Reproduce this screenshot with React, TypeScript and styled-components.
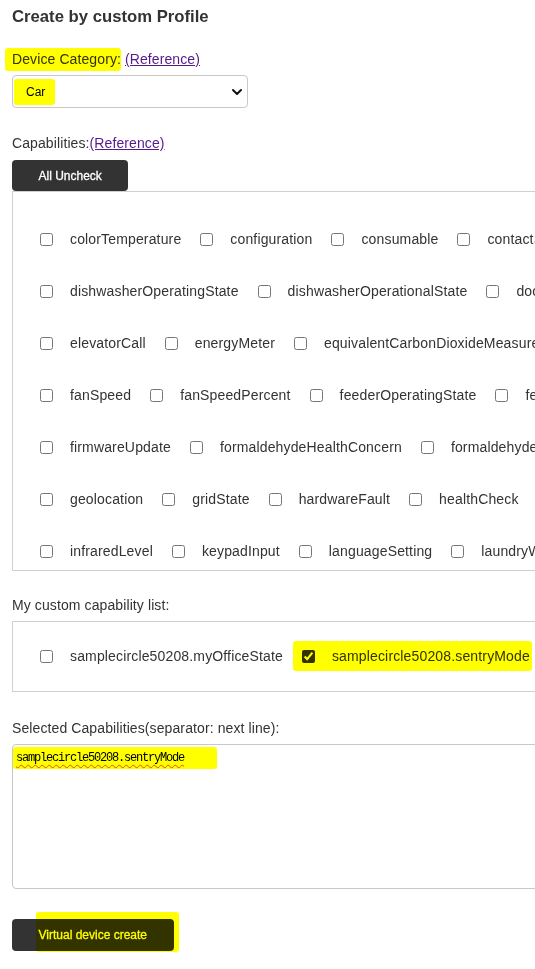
import React from 'react';
import styled, { createGlobalStyle } from 'styled-components';
import { ChevronDown } from 'lucide-react';

const GlobalStyle = createGlobalStyle`
  html, body {
    margin: 0;
    padding: 0;
    background: #fff;
    overflow: hidden;
  }
  body {
    font-family: 'Liberation Sans', Arial, sans-serif;
    color: #333;
  }
`;

const Page = styled.div`
  width: 535px;
  height: 969px;
  overflow: hidden;
  padding-left: 12px;
  box-sizing: border-box;
`;

const Title = styled.h3`
  margin: 7px 0 0;
  font-size: 16.7px;
  line-height: 20px;
  font-weight: bold;
  color: #333;
`;

const Label = styled.div<{ $top: number }>`
  margin-top: ${(p) => p.$top}px;
  font-size: 14px;
  line-height: 20px;
  letter-spacing: 0.1px;
  color: #333;
  white-space: nowrap;
`;

const RefLink = styled.a`
  color: #551a8b;
  text-decoration: underline;
  cursor: pointer;
`;

// yellow marker stroke laid over the content
const Mark = styled.span<{ $l: number; $r: number; $t: number; $b: number }>`
  position: relative;
  display: inline-flex;
  align-items: center;

  &::after {
    content: '';
    position: absolute;
    left: ${(p) => p.$l}px;
    right: ${(p) => p.$r}px;
    top: ${(p) => p.$t}px;
    bottom: ${(p) => p.$b}px;
    background: #ffff00;
    mix-blend-mode: multiply;
    border-radius: 3px;
    pointer-events: none;
  }
`;

const SelectBox = styled.div`
  margin-top: 6px;
  width: 236px;
  height: 33px;
  box-sizing: border-box;
  border: 1px solid #c8c8c8;
  border-radius: 4px;
  display: flex;
  align-items: center;
  justify-content: space-between;
  padding: 0 2px 0 13px;
  font-size: 12px;
  color: #000;
`;

const DarkButton = styled.button<{ $top: number; $height: number }>`
  margin-top: ${(p) => p.$top}px;
  height: ${(p) => p.$height}px;
  padding: 0 26.5px;
  background: #333;
  color: #fff;
  border: none;
  border-radius: 4px;
  font-family: 'Liberation Sans', Arial, sans-serif;
  font-size: 12px;
  -webkit-text-stroke: 0.3px currentColor;
  display: flex;
  align-items: center;
  cursor: pointer;
`;

const CheckPanel = styled.div<{ $height: number; $padTop: number }>`
  width: 900px;
  height: ${(p) => p.$height}px;
  box-sizing: border-box;
  border: 1px solid #cfcfcf;
  padding-top: ${(p) => p.$padTop}px;
  overflow: hidden;
`;

const CheckRow = styled.div`
  height: 52px;
  display: flex;
  align-items: center;
  padding-left: 27px;
  white-space: nowrap;
`;

const Item = styled.label<{ $last?: boolean }>`
  display: inline-flex;
  align-items: center;
  margin-right: ${(p) => (p.$last ? 0 : 19)}px;
  font-size: 14px;
  letter-spacing: 0.15px;
  color: #333;
`;

const Check = styled.input`
  width: 13px;
  height: 13px;
  margin: 0 17px 0 0;
  accent-color: #333;
`;

const TextBox = styled.div`
  margin-top: 6px;
  width: 900px;
  height: 145px;
  box-sizing: border-box;
  border: 1px solid #c8c8c8;
  border-radius: 4px;
  padding: 2px 3px;
`;

const MonoText = styled.span`
  font-family: 'Liberation Mono', 'Courier New', monospace;
  font-size: 12px;
  line-height: 16px;
  letter-spacing: -1.2px;
  color: #000;
  text-decoration: underline wavy #e0533a;
  text-decoration-thickness: 1px;
  text-underline-offset: 3px;
`;

const capabilityRows: string[][] = [
  ['colorTemperature', 'configuration', 'consumable', 'contactSensor'],
  ['dishwasherOperatingState', 'dishwasherOperationalState', 'doorControl'],
  ['elevatorCall', 'energyMeter', 'equivalentCarbonDioxideMeasurement'],
  ['fanSpeed', 'fanSpeedPercent', 'feederOperatingState', 'feederPortion'],
  ['firmwareUpdate', 'formaldehydeHealthConcern', 'formaldehydeMeasurement'],
  ['geolocation', 'gridState', 'hardwareFault', 'healthCheck', 'humidityMeasurement'],
  ['infraredLevel', 'keypadInput', 'languageSetting', 'laundryWasherMode'],
  ['lock', 'lockCodes', 'mediaPlayback', 'motionSensor'],
];

const App: React.FC = () => {
  return (
    <Page>
      <GlobalStyle />
      <Title>Create by custom Profile</Title>

      <Label $top={22}>
        <Mark $l={-7} $r={0} $t={-1} $b={-2}>Device Category:</Mark>{' '}
        <RefLink>(Reference)</RefLink>
      </Label>
      <SelectBox role="combobox">
        <Mark $l={-12} $r={-10} $t={-6} $b={-6}>Car</Mark>
        <ChevronDown size={16} strokeWidth={3} color="#111" />
      </SelectBox>

      <Label $top={25}>
        Capabilities:<RefLink>(Reference)</RefLink>
      </Label>
      <DarkButton $top={7} $height={31}>All Uncheck</DarkButton>
      <CheckPanel $height={380} $padTop={21}>
        {capabilityRows.map((row, i) => (
          <CheckRow key={i}>
            {row.map((name) => (
              <Item key={name}>
                <Check type="checkbox" />
                {name}
              </Item>
            ))}
          </CheckRow>
        ))}
      </CheckPanel>

      <Label $top={24}>My custom capability list:</Label>
      <CheckPanel $height={71} $padTop={8} style={{ marginTop: 6 }}>
        <CheckRow>
          <Item>
            <Check type="checkbox" />
            samplecircle50208.myOfficeState
          </Item>
          <Mark $l={-9} $r={-2} $t={-7} $b={-7}>
            <Item $last>
              <Check type="checkbox" defaultChecked />
              samplecircle50208.sentryMode
            </Item>
          </Mark>
        </CheckRow>
      </CheckPanel>

      <Label $top={26}>Selected Capabilities(separator: next line):</Label>
      <TextBox role="textbox">
        <Mark $l={-3} $r={-33} $t={-3} $b={-3}>
          <MonoText>samplecircle50208.sentryMode</MonoText>
        </Mark>
      </TextBox>

      <DarkButton $top={30} $height={32}>
        <Mark $l={-3} $r={-32} $t={-16} $b={-10}>Virtual device create</Mark>
      </DarkButton>
    </Page>
  );
};

export default App;
